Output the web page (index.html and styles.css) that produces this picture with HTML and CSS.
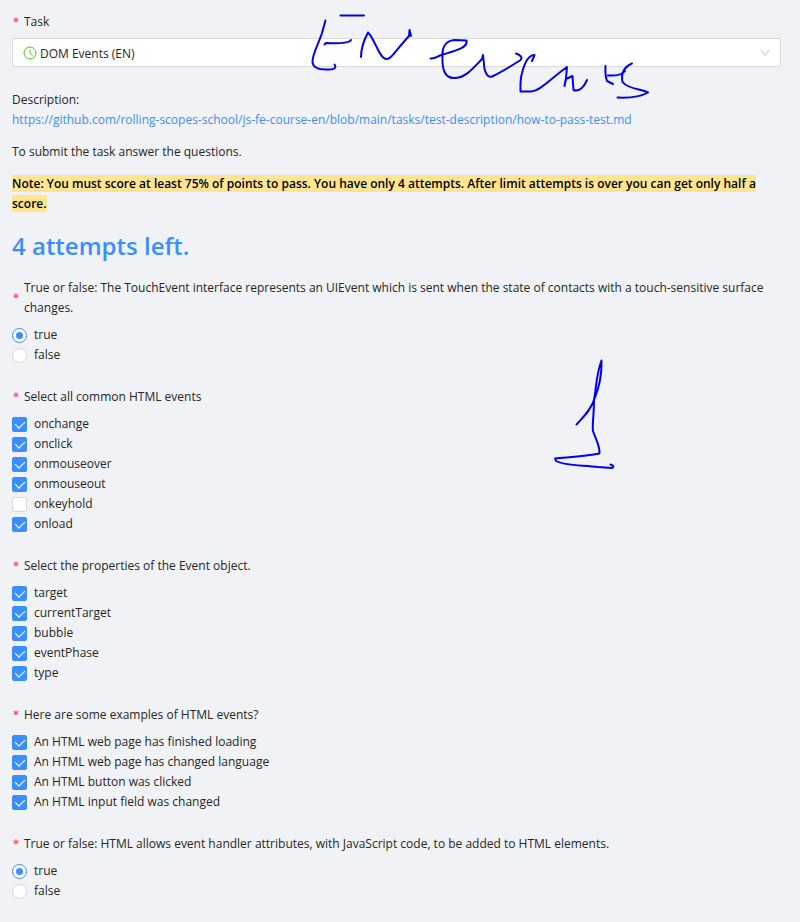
FILE: index.html
```html
<!DOCTYPE html>
<html lang="en">
<head>
<meta charset="utf-8">
<meta name="viewport" content="width=device-width, initial-scale=1">
<title>DOM Events (EN)</title>
<link rel="stylesheet" href="styles.css">
</head>
<body>
<form class="page">
  <div class="field">
    <label class="question required" for="task">Task</label>
    <div class="select">
      <svg class="clock" viewBox="0 0 14 14" aria-hidden="true"><circle cx="7" cy="7" r="6"/><path d="M7 3.5V7.5L9.500 9"/></svg>
      <select id="task"><option>DOM Events (EN)</option></select>
      <svg class="chevron" viewBox="0 0 10 8" aria-hidden="true"><path d="M1 1l4 5.500L9 1"/></svg>
    </div>
  </div>

  <div class="intro">
    <p>Description:<br><a href="https://github.com/rolling-scopes-school/js-fe-course-en/blob/main/tasks/test-description/how-to-pass-test.md">https://github.com/rolling-scopes-school/js-fe-course-en/blob/main/tasks/test-description/how-to-pass-test.md</a></p>
    <p>To submit the task answer the questions.</p>
    <p><mark>Note: You must score at least 75% of points to pass. You have only 4 attempts. After limit attempts is over you can get only half a score.</mark></p>
  </div>
  <h3 class="attempts">4 attempts left.</h3>

  <fieldset class="group">
    <legend class="question required">True or false: The TouchEvent interface represents an UIEvent which is sent when the state of contacts with a touch-sensitive surface changes.</legend>
    <label class="option"><input type="radio" name="q1" checked>true</label>
    <label class="option"><input type="radio" name="q1">false</label>
  </fieldset>

  <fieldset class="group">
    <legend class="question required">Select all common HTML events</legend>
    <label class="option"><input type="checkbox" checked>onchange</label>
    <label class="option"><input type="checkbox" checked>onclick</label>
    <label class="option"><input type="checkbox" checked>onmouseover</label>
    <label class="option"><input type="checkbox" checked>onmouseout</label>
    <label class="option"><input type="checkbox">onkeyhold</label>
    <label class="option"><input type="checkbox" checked>onload</label>
  </fieldset>

  <fieldset class="group">
    <legend class="question required">Select the properties of the Event object.</legend>
    <label class="option"><input type="checkbox" checked>target</label>
    <label class="option"><input type="checkbox" checked>currentTarget</label>
    <label class="option"><input type="checkbox" checked>bubble</label>
    <label class="option"><input type="checkbox" checked>eventPhase</label>
    <label class="option"><input type="checkbox" checked>type</label>
  </fieldset>

  <fieldset class="group">
    <legend class="question required">Here are some examples of HTML events?</legend>
    <label class="option"><input type="checkbox" checked>An HTML web page has finished loading</label>
    <label class="option"><input type="checkbox" checked>An HTML web page has changed language</label>
    <label class="option"><input type="checkbox" checked>An HTML button was clicked</label>
    <label class="option"><input type="checkbox" checked>An HTML input field was changed</label>
  </fieldset>

  <fieldset class="group">
    <legend class="question required">True or false: HTML allows event handler attributes, with JavaScript code, to be added to HTML elements.</legend>
    <label class="option"><input type="radio" name="q5" checked>true</label>
    <label class="option"><input type="radio" name="q5">false</label>
  </fieldset>
</form>

<svg class="ink" width="700" height="500" viewBox="0 0 700 500" aria-hidden="true">
  <path d="M325.500 20.500L322 33C318 45 312 55 312.500 62C313 68 320 69.500 326 69.500C334 70 337 68 334.500 64.500"/>
  <path d="M324.500 44.500L326 43C336 43.500 347 43.500 350 41L351 40M340.500 15.500H364"/>
  <path d="M361 57C361 48 364 40 368 32.500C375 39 379 58 386 59C391 60 395 51 409 36L409.500 30L411 36"/>
  <path d="M430.500 58.500C437 59 436 56 443 54.500C455 51 468 48 466.500 40.500L454 40C446 41 442 47 442.500 56C442 68 444 78 454 78C466 78 473 68 482 59L483 55L484.500 69C486 74 488 78 492 76.500C502 72 514 64 520 60.500C523 58 521 55 516 53.500"/>
  <path d="M532 61L534.500 55C528 55 524 65 522 73C520 80 520.500 86 520.500 91.500H530C540 91.500 550 79 567 67L566 78L564.500 86L566 79L572.500 76L573.500 90C579 92 584 87 587 80"/>
  <path d="M605.500 66C605 73 606 78 607 81L613 84M608 75.500C617 76 622 75 625 71M632 63.500C624 67 621 74 622.500 82C628 89 641 89 648 92.500C640 97 628 98 617.500 97.500"/>
  <path d="M576.500 424.500C584 416 590 411 594 400C599 388 602 375 601.500 360.500C596 375 596 390 594 400C594 415 592 425 593 431C596 440 600 446 599.500 453.500C586 456 570 457 555 458.500L556 461C565 466 585 465 598 467L612 468C615 466 612 465 610.500 464.500"/>
</svg>
</body>
</html>
```
FILE: styles.css
```css
* { box-sizing: border-box; }

body {
  margin: 0;
  background: #f0f2f5;
  color: #262626;
  font: 12px/20px "Open Sans", "Noto Sans", sans-serif;
}

.page { padding: 12px 19px 0 12px; }

.question {
  display: flex;
  align-items: center;
  padding: 0;
  margin-bottom: 7px;
}

.field .question { margin-bottom: 6px; }

.required::before {
  content: "*";
  flex: none;
  width: 11px;
  padding-left: 1px;
  color: #ff2f33;
  font-family: "DejaVu Sans", sans-serif;
}

.select {
  display: flex;
  align-items: center;
  gap: 3px;
  height: 29px;
  padding: 0 10px;
  border: 1px solid #d9d9d9;
  border-radius: 2px;
  background: #fff;
}

.select select {
  flex: 1;
  min-width: 0;
  padding: 2px 0 0;
  border: 0;
  background: none;
  color: inherit;
  font: inherit;
  appearance: none;
}

.clock, .chevron { flex: none; fill: none; }
.clock { width: 14px; height: 14px; stroke: #52c41a; }
.chevron { width: 10px; height: 8px; stroke: #bfbfbf; }

.intro { padding-top: 23px; }
.intro p { margin: 0 0 12px; }
.intro a { color: #3b8eff; text-decoration: none; }

mark {
  background: #ffe58f;
  color: #000;
  font-weight: 600;
}

.attempts {
  margin: 18px 0;
  color: #3b8eff;
  font-size: 24px;
  font-weight: 600;
  line-height: 28px;
}

.group {
  min-width: 0;
  margin: 0 0 22px;
  padding: 0;
  border: 0;
}

.option {
  display: flex;
  align-items: center;
  gap: 7px;
}

.option input {
  appearance: none;
  display: grid;
  place-items: center;
  flex: none;
  width: 15px;
  height: 15px;
  margin: 0;
  border: 1px solid #d9d9d9;
  border-radius: 2px;
  background: #fff;
}

.option input[type="radio"] { border-radius: 50%; }
.option input:checked { border-color: #3b8eff; }
.option input[type="checkbox"]:checked { background: #3b8eff; }

.option input[type="radio"]:checked::before {
  content: "";
  width: 7px;
  height: 7px;
  border-radius: 50%;
  background: #3b8eff;
}

.option input[type="checkbox"]:checked::before {
  content: "";
  width: 5px;
  height: 8px;
  margin-bottom: 2px;
  border: solid #fff;
  border-width: 0 1px 1px 0;
  transform: rotate(45deg);
}

.ink {
  position: absolute;
  top: 0;
  left: 0;
  pointer-events: none;
  fill: none;
  stroke: #0000f5;
  stroke-width: 2;
  stroke-linecap: round;
  stroke-linejoin: round;
}
```
